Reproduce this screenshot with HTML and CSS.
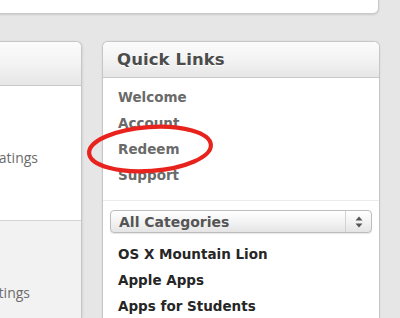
FILE: index.html
```html
<!DOCTYPE html>
<html>
<head>
<meta charset="utf-8">
<link rel="stylesheet" href="styles.css">
</head>
<body>
<div class="page">
  <div class="top-card"></div>
  <div class="columns">
    <div class="left-card">
      <div class="card-head"></div>
      <div class="left-body">
        <div class="rating-row">atings</div>
      </div>
      <div class="left-foot">
        <div class="rating-row2">tings</div>
      </div>
    </div>
    <div class="right-card">
      <div class="card-head"><h2 class="title">Quick Links</h2></div>
      <ul class="links">
        <li>Welcome</li>
        <li>Account</li>
        <li class="redeem">Redeem
          <svg class="circle" width="140" height="60" viewBox="0 0 140 60"><ellipse cx="70" cy="30" rx="61" ry="22" transform="rotate(-4 70 30)" fill="none" stroke="#e8231d" stroke-width="4.2"/></svg>
        </li>
        <li>Support</li>
      </ul>
      <div class="cats">
        <div class="select">
          <span class="sel-label">All Categories</span>
          <span class="sel-arrows"><svg width="8" height="12" viewBox="0 0 8 12"><path d="M4 0.5 L7.5 4.5 H0.5 Z M4 11.5 L7.5 7.5 H0.5 Z" fill="#555"/></svg></span>
        </div>
        <ul class="catlist">
          <li>OS X Mountain Lion</li>
          <li>Apple Apps</li>
          <li>Apps for Students</li>
        </ul>
      </div>
    </div>
  </div>
</div>
</body>
</html>
```
FILE: styles.css
```css
html, body { margin: 0; padding: 0; }
body {
  background: #e6e6e6;
  font-family: "DejaVu Sans", "Lucida Grande", sans-serif;
  width: 400px;
  height: 318px;
  overflow: hidden;
}
.page { position: relative; }
.top-card {
  margin: -20px 0 0 -20px;
  width: 399px;
  height: 34px;
  background: #fff;
  border: 1px solid #c9c9c9;
  border-radius: 0 0 6px 6px;
  box-shadow: 0 1px 2px rgba(0,0,0,0.12);
  box-sizing: border-box;
}
.columns {
  display: flex;
  gap: 20px;
  margin-top: 27px;
  margin-left: -20px;
  align-items: flex-start;
}
.left-card {
  width: 102px;
  height: 277px;
  background: #fff;
  border: 1px solid #c6c6c6;
  border-bottom: 0;
  border-radius: 6px 6px 0 0;
  box-sizing: border-box;
  box-shadow: 1px 0 2px rgba(0,0,0,0.08);
  display: flex;
  flex-direction: column;
}
.card-head {
  height: 35px;
  background: linear-gradient(#fbfbfb, #f3f3f3 50%, #e6e6e6);
  border-bottom: 1px solid #c8c8c8;
  border-radius: 5px 5px 0 0;
  display: flex;
  align-items: center;
}
.left-card .card-head { height: 43px; }
.left-body {
  height: 134px;
  border-bottom: 1px solid #d4d4d4;
  position: relative;
}
.rating-row {
  position: absolute;
  right: 43px;
  top: 62px;
  font-family: "Open Sans", sans-serif;
  font-size: 14px;
  color: #6b6b6b;
}
.left-foot {
  flex: 1;
  background: #f2f2f2;
  position: relative;
}
.rating-row2 {
  position: absolute;
  right: 51px;
  top: 62px;
  font-family: "Open Sans", sans-serif;
  font-size: 14px;
  color: #6b6b6b;
}
.right-card {
  width: 278px;
  height: 277px;
  background: #fff;
  border: 1px solid #c6c6c6;
  border-bottom: 0;
  border-radius: 6px 6px 0 0;
  box-sizing: border-box;
  box-shadow: 0 0 2px rgba(0,0,0,0.08);
}
.title {
  margin: 0 0 0 14px;
  font-size: 16.5px;
  font-weight: bold;
  color: #4c4c4c;
  letter-spacing: 0.1px;
  text-shadow: 0 1px 0 #fff;
}
.links {
  list-style: none;
  margin: 0;
  padding: 6px 0 12px 15px;
  border-bottom: 1px solid #ececec;
}
.links li {
  font-size: 13.5px;
  font-weight: bold;
  color: #6a6a6a;
  line-height: 26px;
  height: 26px;
}
.redeem { position: relative; }
.circle {
  position: absolute;
  left: -38px;
  top: -17px;
}
.cats { padding: 9px 7px 0 7px; }
.select {
  height: 23px;
  border: 1px solid #bdbdbd;
  border-radius: 4px;
  background: linear-gradient(#ffffff, #f1f1f1 60%, #e4e4e4);
  box-shadow: 0 1px 1px rgba(0,0,0,0.1);
  display: flex;
  align-items: center;
  box-sizing: border-box;
}
.sel-label {
  flex: 1;
  padding-left: 8px;
  font-size: 14px;
  font-weight: bold;
  color: #555;
}
.sel-arrows {
  width: 25px;
  height: 100%;
  border-left: 1px solid #d2d2d2;
  display: flex;
  align-items: center;
  justify-content: center;
}
.catlist {
  list-style: none;
  margin: 0;
  padding: 8px 0 0 8px;
}
.catlist li {
  font-size: 13.5px;
  font-weight: bold;
  color: #262626;
  line-height: 26px;
  height: 26px;
}
```
